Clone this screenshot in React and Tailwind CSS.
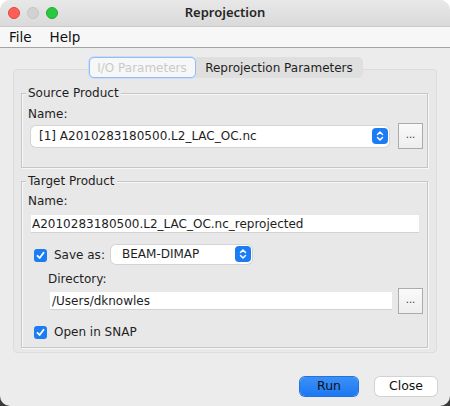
import React from "react";

const font = { fontFamily: '"DejaVu Sans", "Noto Sans", sans-serif' };

function Stepper() {
  return (
    <div className="w-[16px] h-[16px] rounded-[4px] bg-[#1b7cf4] flex items-center justify-center">
      <svg width="8" height="12" viewBox="0 0 8 12" fill="none" stroke="white" strokeWidth="1.5" strokeLinecap="round" strokeLinejoin="round">
        <path d="M1.5 4.5 L4 2 L6.5 4.5" />
        <path d="M1.5 7.5 L4 10 L6.5 7.5" />
      </svg>
    </div>
  );
}

function Check() {
  return (
    <div className="w-[13px] h-[13px] rounded-[3px] bg-[#1b7cf4] flex items-center justify-center">
      <svg width="11" height="11" viewBox="0 0 11 11" fill="none" stroke="white" strokeWidth="1.8" strokeLinecap="round" strokeLinejoin="round">
        <path d="M2.5 5.8 L4.6 8 L8.6 2.8" />
      </svg>
    </div>
  );
}

function DotsButton() {
  return (
    <div className="w-[25px] h-[26px] border border-[#ababab] bg-gradient-to-b from-[#fafafa] to-[#eeeeee] flex items-end justify-center pb-[8px] text-[10px] leading-none text-[#333]">
      ...
    </div>
  );
}

function Fieldset({ title, className, children }) {
  return (
    <div className={"relative border border-[#c6c6c6] shadow-[inset_1px_1px_0_#f7f7f7,1px_1px_0_#f7f7f7] " + className}>
      <div className="absolute left-[4px] top-[-9px] px-[2px] bg-[#e8e8e8] text-[12px] leading-[16px] text-[#1e1e1e]">{title}</div>
      {children}
    </div>
  );
}

export default function App() {
  return (
    <div className="w-[450px] h-[406px] bg-[linear-gradient(to_bottom,#ffffff_50%,#3a3a3a_50%)] text-[#1e1e1e]" style={font}>
      <div className="w-[450px] h-[406px] rounded-[10px] overflow-hidden bg-[#ececec] flex flex-col">
        {/* Title bar */}
        <div className="relative h-[27px] bg-gradient-to-b from-[#e8e8e8] to-[#dadada] border-b border-[#c9c9c9] flex items-center justify-center">
          <div className="absolute left-[8px] top-[7px] flex gap-[7px]">
            <div className="w-[12px] h-[12px] rounded-full bg-[#fe5f57] border border-[#e0463f]" />
            <div className="w-[12px] h-[12px] rounded-full bg-[#d2d2d2] border border-[#c4c4c4]" />
            <div className="w-[12px] h-[12px] rounded-full bg-[#29c840] border border-[#1fab31]" />
          </div>
          <div className="text-[13px] font-semibold text-[#262626] pt-[0px]" style={{ fontFamily: '"Noto Sans", sans-serif' }}>Reprojection</div>
        </div>
        {/* Menu bar */}
        <div className="h-[21px] bg-[#f7f7f7] border-b border-[#a3a3a3] flex items-center text-[13.5px] text-[#111]">
          <span className="ml-[9px]">File</span>
          <span className="ml-[18px]">Help</span>
        </div>
        {/* Content */}
        <div className="flex-1 flex flex-col px-[13px] pt-[9px]">
          <div className="relative">
            <div className="absolute left-0 right-0 top-0 flex justify-center z-10 pl-[0px]">
              <div className="flex h-[21px] text-[12px] ml-[1px]">
                <div className="w-[107px] rounded-[5px] border border-[#93bbf4] bg-[#f7f7f7] text-[#cacaca] flex items-center justify-center shadow-[0_0_0_1px_#c9ddf9]">
                  I/O Parameters
                </div>
                <div className="w-[167px] rounded-r-[5px] bg-[#dfdfdf] text-[#1e1e1e] flex items-center justify-center">
                  Reprojection Parameters
                </div>
              </div>
            </div>
            <div className="mt-[12px] h-[284px] rounded-[4px] border border-[#dcdcdc] bg-[#e8e8e8] pl-[7px] pr-[8px] pt-[23px]">
              <Fieldset title="Source Product" className="h-[75px]">
                <div className="pl-[6px] pt-[12px] text-[12px] leading-[16px]">Name:</div>
                <div className="flex items-center pl-[9px] pr-[4px] mt-[1px]">
                  <div className="flex-1 h-[21px] rounded-[5px] bg-white shadow-[0_0_0_1px_#d4d4d4] flex items-center justify-between pl-[8px] pr-[1px] text-[12px]">
                    <span>[1] A2010283180500.L2_LAC_OC.nc</span>
                    <Stepper />
                  </div>
                  <div className="ml-[9px]"><DotsButton /></div>
                </div>
              </Fieldset>
              <Fieldset title="Target Product" className="mt-[13px] h-[167px]">
                <div className="pl-[6px] pt-[11px] text-[12px] leading-[16px]">Name:</div>
                <div className="ml-[9px] mr-[8px] mt-[6px] h-[18px] bg-white border-b border-[#d2d2d2] flex items-center pl-[1px] text-[12px]">
                  A2010283180500.L2_LAC_OC.nc_reprojected
                </div>
                <div className="flex items-center mt-[11px] pl-[12px] h-[20px]">
                  <div className="pt-[3px]"><Check /></div>
                  <span className="ml-[7px] w-[57px] text-[12px] pt-[1px]">Save as:</span>
                  <div className="w-[141px] h-[19px] rounded-[5px] bg-white shadow-[0_0_0_1px_#d4d4d4] flex items-center justify-between pl-[11px] pr-[1px] text-[12px]">
                    <span>BEAM-DIMAP</span>
                    <Stepper />
                  </div>
                </div>
                <div className="pl-[26px] mt-[7px] text-[12px] leading-[16px]">Directory:</div>
                <div className="flex items-center pl-[28px] pr-[4px] mt-[1px]">
                  <div className="flex-1 h-[18px] bg-white border-b border-[#d2d2d2] flex items-center pl-[2px] text-[12px]">
                    /Users/dknowles
                  </div>
                  <div className="ml-[6px]"><DotsButton /></div>
                </div>
                <div className="flex items-center mt-[10px] pl-[12px] h-[16px]">
                  <Check />
                  <span className="ml-[7px] text-[12px]">Open in SNAP</span>
                </div>
              </Fieldset>
            </div>
          </div>
          <div className="flex justify-end gap-[17px] mt-[24px]">
            <div className="w-[58px] h-[19px] rounded-[5px] bg-gradient-to-b from-[#3b90f7] to-[#1b78f2] shadow-[0_0_0_1px_#2273e0] text-[12.5px] text-[#111] flex items-center justify-center">Run</div>
            <div className="w-[62px] h-[19px] rounded-[5px] bg-white shadow-[0_0_0_1px_#d2d2d2] text-[12.5px] text-[#111] flex items-center justify-center">Close</div>
          </div>
        </div>
      </div>
    </div>
  );
}
